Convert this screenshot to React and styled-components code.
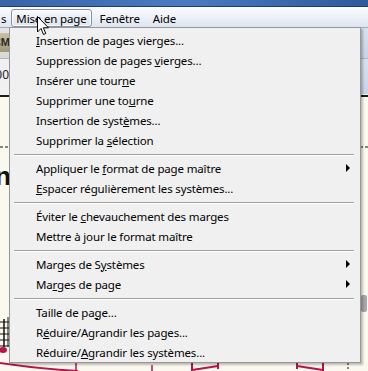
import React from 'react';
import styled, { createGlobalStyle } from 'styled-components';

const GlobalStyle = createGlobalStyle`
  html, body {
    margin: 0;
    padding: 0;
    overflow: hidden;
  }
  body {
    font-family: "Noto Sans", "DejaVu Sans", sans-serif;
  }
`;

const Window = styled.div`
  position: relative;
  width: 368px;
  height: 371px;
  overflow: hidden;
  display: flex;
  flex-direction: column;
  background: #fbf9ef;
`;

const TitleStrip = styled.div`
  height: 6px;
  flex: none;
  background: linear-gradient(90deg, #3a64a8 0%, #4a7bc0 50%, #2f5a9c 100%);
  border-bottom: 1px solid #1c3d6e;
`;

const MenuBar = styled.div`
  height: 20px;
  flex: none;
  display: flex;
  align-items: flex-end;
  background: linear-gradient(180deg, #fbfcfe 0%, #eef2f9 45%, #dde4f1 100%);
  border-bottom: 1px solid #a5a9b0;
  font-size: 11.5px;
  letter-spacing: -0.15px;
  color: #000;
`;

const MenuBarItem = styled.div`
  height: 18px;
  box-sizing: border-box;
  display: flex;
  align-items: center;
  padding: 0 ${p => p.$pad ?? 4}px;
  margin-right: ${p => p.$gap ?? 0}px;
  border: 1px solid ${p => (p.$active ? '#8592a8' : 'transparent')};
  border-radius: 3px;
  background: ${p =>
    p.$active ? 'linear-gradient(180deg, #fafbfd 0%, #e9edf4 50%, #dfe4ed 100%)' : 'transparent'};
  box-shadow: ${p => (p.$active ? 'inset 0 0 0 1px rgba(255,255,255,0.8)' : 'none')};
  white-space: nowrap;
`;

const Workspace = styled.div`
  flex: 1;
  display: flex;
  flex-direction: column;
  min-height: 0;
`;

const ToolRow = styled.div`
  height: ${p => p.$h}px;
  flex: none;
  display: flex;
  justify-content: space-between;
  background: ${p => p.$bg};
  border-bottom: 1px solid ${p => p.$line};
`;

const ToolButton = styled.div`
  width: 10px;
  margin-top: 5px;
  height: 19px;
  background: linear-gradient(180deg, #c9c2a4 0%, #9e967a 100%);
  font: bold 11px "Liberation Sans", sans-serif;
  color: #2a2a2a;
  overflow: hidden;
  direction: rtl;
  line-height: 19px;
`;

const ZoomText = styled.div`
  font: 12px "Noto Sans", sans-serif;
  color: #222;
  margin-top: 7px;
  width: 9px;
  overflow: hidden;
  direction: rtl;
`;

const SidePanel = styled.div`
  width: 7px;
  background: linear-gradient(180deg, #d9e0ef 0%, #c9d3e8 100%);
  border-left: 1px solid #8e9bb3;
`;

const Score = styled.svg`
  flex: 1;
  display: block;
  width: 368px;
  border-top: 2px solid #1b1b1b;
`;

const Menu = styled.div`
  position: absolute;
  left: 9px;
  top: 27px;
  width: 352px;
  box-sizing: border-box;
  padding: 2px 2px 0 2px;
  background: #f0f0f0;
  border: 1px solid #979797;
  box-shadow: 2px 2px 2px rgba(0, 0, 0, 0.25);
  font-size: 11.5px;
  letter-spacing: -0.15px;
  color: #000;
`;

const Item = styled.div`
  height: 20px;
  display: flex;
  align-items: center;
  justify-content: space-between;
  padding: 0 8px 0 24px;
  white-space: nowrap;

  u {
    text-decoration: underline;
    text-underline-offset: 1px;
  }
`;

const Arrow = styled.span`
  width: 0;
  height: 0;
  border-top: 4px solid transparent;
  border-bottom: 4px solid transparent;
  border-left: 4px solid #000;
`;

const Separator = styled.div`
  height: 8px;
  display: flex;
  align-items: center;
  padding: 0 4px 0 2px;

  &::after {
    content: '';
    flex: 1;
    height: 1px;
    background: #a0a0a0;
    box-shadow: 0 1px 0 #ffffff;
  }
`;

const Cursor = styled.svg`
  position: absolute;
  left: 37px;
  top: 16px;
`;

const groups = [
  [
    ['', 'I', 'nsertion de pages vierges...'],
    ['Suppression de pages ', 'v', 'ierges...'],
    ['Insérer une tour', 'n', 'e'],
    ['Supprimer une to', 'u', 'rne'],
    ['Insertion de syst', 'è', 'mes...'],
    ['Supprimer la ', 's', 'élection'],
  ],
  [
    ['Appliquer le ', 'f', 'ormat de page maître', true],
    ['', 'E', 'spacer régulièrement les systèmes...'],
  ],
  [
    ['Éviter le ', 'c', 'hevauchement des marges'],
    ['Mettre à jour le format maître', '', ''],
  ],
  [
    ['Marges de S', 'y', 'stèmes', true],
    ['Ma', 'r', 'ges de page', true],
  ],
  [
    ['Taille de pa', 'g', 'e...'],
    ['R', 'é', 'duire/Agrandir les pages...'],
    ['Réduire/', 'A', 'grandir les systèmes...'],
  ],
];

const App = () => {
  return (
    <>
      <GlobalStyle />
      <Window>
        <TitleStrip />
        <MenuBar>
          <MenuBarItem $pad={0} $gap={4}>s</MenuBarItem>
          <MenuBarItem $active $pad={4} $gap={3}>
            Mise en page
          </MenuBarItem>
          <MenuBarItem $pad={4} $gap={3}>
            Fenêtre
          </MenuBarItem>
          <MenuBarItem $pad={4}>Aide</MenuBarItem>
        </MenuBar>
        <Workspace>
          <ToolRow $h={30} $bg="linear-gradient(180deg, #e4e4e4 0%, #d8d8d8 100%)" $line="#b5b5b5">
            <ToolButton>CM</ToolButton>
            <SidePanel />
          </ToolRow>
          <ToolRow $h={35} $bg="#f0f0f0" $line="#f0f0f0">
            <ZoomText>100</ZoomText>
            <SidePanel />
          </ToolRow>
          <Score viewBox="0 0 368 274" height="274">
            <line x1="0" y1="50" x2="368" y2="50" stroke="#111" strokeWidth="1" strokeDasharray="3 2" />
            <text x="-5" y="88" fontFamily="Liberation Sans, sans-serif" fontWeight="bold" fontSize="26" fill="#111">
              n
            </text>
            {[225, 231, 237, 243, 249].map(y => (
              <line key={y} x1="0" y1={y} x2="12" y2={y} stroke="#111" strokeWidth="1" />
            ))}
            <line x1="4" y1="222" x2="4" y2="250" stroke="#111" strokeWidth="1.5" />
            <line x1="8" y1="220" x2="8" y2="250" stroke="#111" strokeWidth="1" />
            <ellipse cx="3" cy="253" rx="4" ry="3" fill="#b3164a" />
            <path d="M0 266 Q 40 272 78 274" stroke="#b3164a" strokeWidth="2" fill="none" />
            <line x1="76" y1="266" x2="76" y2="274" stroke="#b3164a" strokeWidth="1.5" />
            <line x1="152" y1="268" x2="152" y2="274" stroke="#b3164a" strokeWidth="1.5" />
            <path d="M192 266 L192 274 M192 273 L218 269 M218 266 L218 272" stroke="#b3164a" strokeWidth="2" fill="none" />
            <path d="M297 266 L297 272 M297 269 L323 273 M323 266 L323 274" stroke="#b3164a" strokeWidth="2" fill="none" />
            <line x1="348" y1="266" x2="348" y2="274" stroke="#111" strokeWidth="1" strokeDasharray="2 2" />
            <rect x="361" y="198" width="6" height="17" rx="2" fill="#a6a6a6" />
          </Score>
        </Workspace>

        <Menu>
          {groups.map((group, gi) => (
            <React.Fragment key={gi}>
              {gi > 0 && <Separator />}
              {group.map(([before, key, after, sub]) => (
                <Item key={before + key + after}>
                  <span>
                    {before}
                    {key && <u>{key}</u>}
                    {after}
                  </span>
                  {sub && <Arrow />}
                </Item>
              ))}
            </React.Fragment>
          ))}
        </Menu>

        <Cursor width="13" height="20" viewBox="0 0 13 20">
          <path
            d="M0.5 0.5 L0.5 16 L4 12.5 L6.5 18.5 L8.8 17.5 L6.4 11.8 L11.5 11.8 Z"
            fill="#fff"
            stroke="#000"
            strokeWidth="1"
            strokeLinejoin="round"
          />
        </Cursor>
      </Window>
    </>
  );
};

export default App;
